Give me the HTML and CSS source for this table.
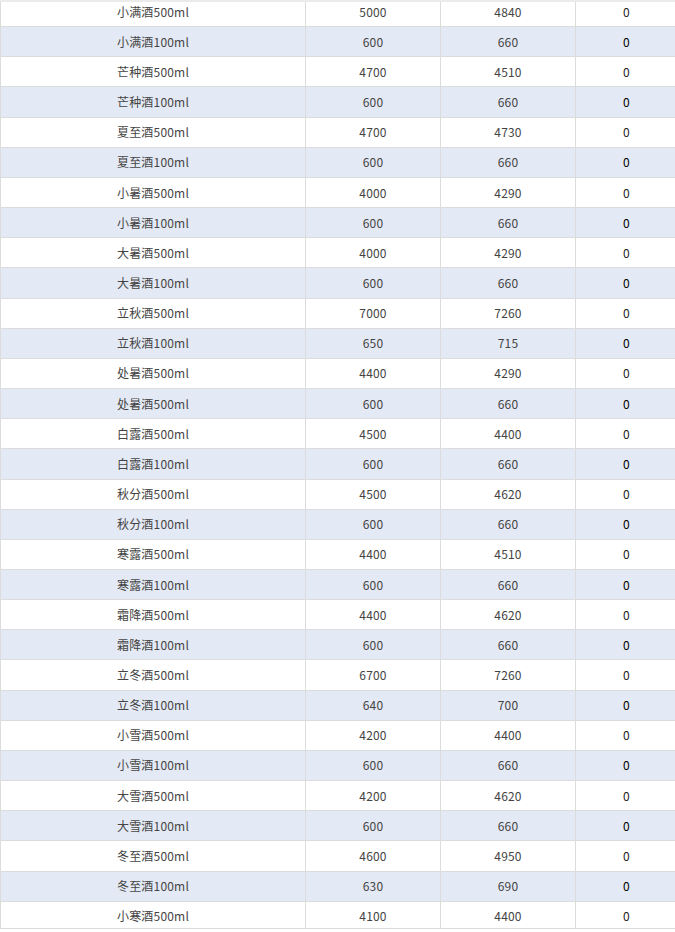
FILE: index.html
```html
<!DOCTYPE html>
<html lang="zh-CN">
<head>
<meta charset="utf-8">
<title>价格表</title>
<link rel="stylesheet" href="styles.css">
</head>
<body>
<div class="frame">
<table class="grid">
<colgroup><col class="c1"><col class="c2"><col class="c3"><col class="c4"></colgroup>
<tbody>
<tr><td>小满酒500ml</td><td>5000</td><td>4840</td><td>0</td></tr>
<tr><td>小满酒100ml</td><td>600</td><td>660</td><td>0</td></tr>
<tr><td>芒种酒500ml</td><td>4700</td><td>4510</td><td>0</td></tr>
<tr><td>芒种酒100ml</td><td>600</td><td>660</td><td>0</td></tr>
<tr><td>夏至酒500ml</td><td>4700</td><td>4730</td><td>0</td></tr>
<tr><td>夏至酒100ml</td><td>600</td><td>660</td><td>0</td></tr>
<tr><td>小暑酒500ml</td><td>4000</td><td>4290</td><td>0</td></tr>
<tr><td>小暑酒100ml</td><td>600</td><td>660</td><td>0</td></tr>
<tr><td>大暑酒500ml</td><td>4000</td><td>4290</td><td>0</td></tr>
<tr><td>大暑酒100ml</td><td>600</td><td>660</td><td>0</td></tr>
<tr><td>立秋酒500ml</td><td>7000</td><td>7260</td><td>0</td></tr>
<tr><td>立秋酒100ml</td><td>650</td><td>715</td><td>0</td></tr>
<tr><td>处暑酒500ml</td><td>4400</td><td>4290</td><td>0</td></tr>
<tr><td>处暑酒500ml</td><td>600</td><td>660</td><td>0</td></tr>
<tr><td>白露酒500ml</td><td>4500</td><td>4400</td><td>0</td></tr>
<tr><td>白露酒100ml</td><td>600</td><td>660</td><td>0</td></tr>
<tr><td>秋分酒500ml</td><td>4500</td><td>4620</td><td>0</td></tr>
<tr><td>秋分酒100ml</td><td>600</td><td>660</td><td>0</td></tr>
<tr><td>寒露酒500ml</td><td>4400</td><td>4510</td><td>0</td></tr>
<tr><td>寒露酒100ml</td><td>600</td><td>660</td><td>0</td></tr>
<tr><td>霜降酒500ml</td><td>4400</td><td>4620</td><td>0</td></tr>
<tr><td>霜降酒100ml</td><td>600</td><td>660</td><td>0</td></tr>
<tr><td>立冬酒500ml</td><td>6700</td><td>7260</td><td>0</td></tr>
<tr><td>立冬酒100ml</td><td>640</td><td>700</td><td>0</td></tr>
<tr><td>小雪酒500ml</td><td>4200</td><td>4400</td><td>0</td></tr>
<tr><td>小雪酒100ml</td><td>600</td><td>660</td><td>0</td></tr>
<tr><td>大雪酒500ml</td><td>4200</td><td>4620</td><td>0</td></tr>
<tr><td>大雪酒100ml</td><td>600</td><td>660</td><td>0</td></tr>
<tr><td>冬至酒500ml</td><td>4600</td><td>4950</td><td>0</td></tr>
<tr><td>冬至酒100ml</td><td>630</td><td>690</td><td>0</td></tr>
<tr><td>小寒酒500ml</td><td>4100</td><td>4400</td><td>0</td></tr>
</tbody>
</table>
</div>
</body>
</html>
```
FILE: styles.css
```css
html, body {
  margin: 0;
  padding: 0;
  background: #ffffff;
}

.frame {
  width: 675px;
  height: 929px;
  overflow: hidden;
  border-top: 2px solid #ebebeb;
  border-bottom: 1px solid #dcdcdc;
  box-sizing: border-box;
}

.grid {
  width: 677px;
  margin-top: -5px;
  border-collapse: collapse;
  table-layout: fixed;
  border-left: 1px solid #dcdcdc;
  font-family: "Noto Sans CJK SC", "Noto Sans", sans-serif;
  font-size: 12px;
  color: #444;
}

.c1 { width: 305px; }
.c2 { width: 135px; }
.c3 { width: 135px; }
.c4 { width: 102px; }

.grid td {
  height: 29.17px;
  padding: 0;
  text-align: center;
  vertical-align: middle;
  border-bottom: 1px solid #dcdcdc;
  border-right: 1px solid #dcdcdc;
  line-height: 16px;
  letter-spacing: 0.2px;
}

.grid tr:nth-child(even) td {
  background: #e4eaf5;
}

.grid td:last-child {
  color: #222;
}

.grid tr:nth-child(even) td:last-child {
  color: #000;
}
```
